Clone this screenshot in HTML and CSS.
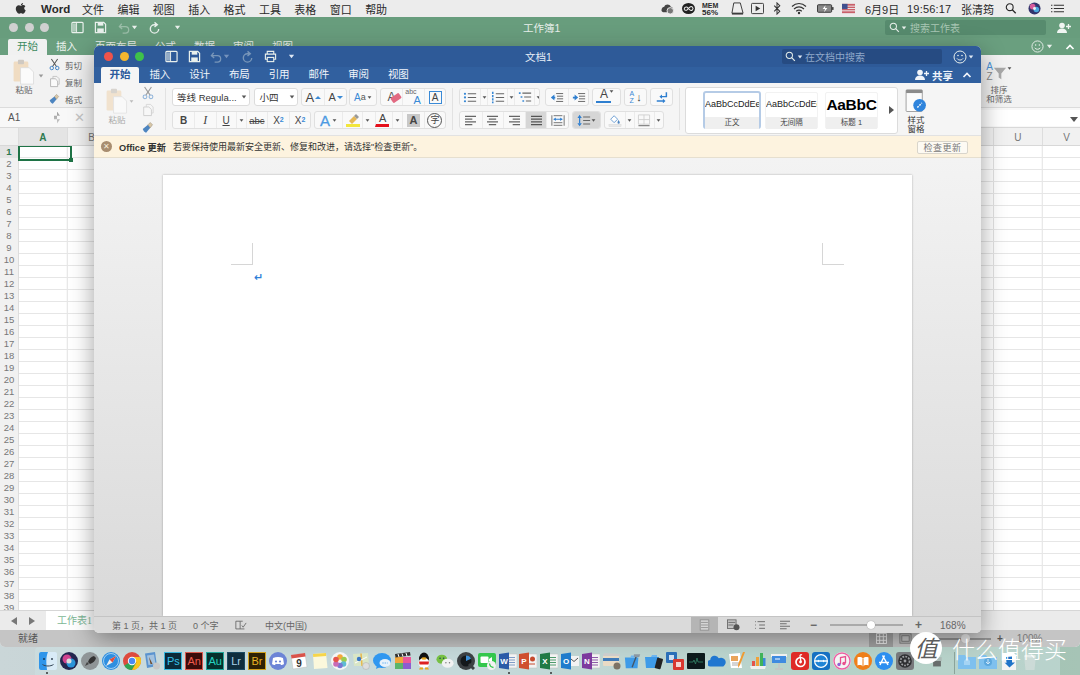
FILE: index.html
```html
<!DOCTYPE html>
<html lang="zh-CN">
<head>
    <meta charset="UTF-8">
    <title>Word 文档1</title>
    <link rel="stylesheet" href="styles.css">
</head>
<body>
<svg class="defs" xmlns="http://www.w3.org/2000/svg">
    <symbol id="sidebar" viewBox="0 0 14 14"><rect x="1" y="1.5" width="12" height="11" rx="1" fill="none" stroke="currentColor" stroke-width="1.3"/><rect x="2" y="2.5" width="4" height="9" fill="currentColor" opacity=".55"/><path d="M6 1.5v11" stroke="currentColor"/></symbol>
    <symbol id="save" viewBox="0 0 14 14"><path d="M1.5 1.5h9l2 2v9h-11z" fill="none" stroke="currentColor" stroke-width="1.3"/><rect x="4" y="1.5" width="6" height="3.5" fill="currentColor"/><rect x="3.5" y="8" width="7" height="4.5" fill="currentColor"/></symbol>
    <symbol id="undo" viewBox="0 0 14 14"><path d="M4 3 1.5 6 4.5 8.5M2 6h6a3.5 3.5 0 0 1 0 7H5" fill="none" stroke="currentColor" stroke-width="1.4"/></symbol>
    <symbol id="redo" viewBox="0 0 14 14"><path d="M7 1.5 10 4 7 6.500M9.500 4H7a4.500 4.500 0 1 0 4.500 4.500" fill="none" stroke="currentColor" stroke-width="1.5"/></symbol>
    <symbol id="print" viewBox="0 0 14 14"><path d="M3.500 4V1.500h7V4M3.500 10H1.500V4.500h11V10h-2" fill="none" stroke="currentColor" stroke-width="1.200"/><rect x="3.500" y="8" width="7" height="4.500" fill="none" stroke="currentColor" stroke-width="1.200"/></symbol>
    <symbol id="drop" viewBox="0 0 8 8"><path d="M1 2h6L4 6z" fill="currentColor"/></symbol>
    <symbol id="mag" viewBox="0 0 14 14"><circle cx="5.500" cy="5.500" r="4" fill="none" stroke="currentColor" stroke-width="1.300"/><path d="m8.500 8.500 4 4" stroke="currentColor" stroke-width="1.500"/></symbol>
    <symbol id="smile" viewBox="0 0 14 14"><circle cx="7" cy="7" r="6" fill="none" stroke="currentColor"/><circle cx="5" cy="5.500" r=".8" fill="currentColor"/><circle cx="9" cy="5.500" r=".8" fill="currentColor"/><path d="M4 8.500c1.500 2 4.500 2 6 0" fill="none" stroke="currentColor"/></symbol>
    <symbol id="share" viewBox="0 0 14 12"><circle cx="5" cy="3.500" r="2.800" fill="currentColor"/><path d="M0 11c0-3 2-4.500 5-4.500s5 1.500 5 4.500z" fill="currentColor"/><path d="M11.500 2v5M9 4.500h5" stroke="currentColor" stroke-width="1.300"/></symbol>
    <symbol id="chev" viewBox="0 0 10 8"><path d="M1.500 6 5 2.500 8.500 6" fill="none" stroke="currentColor" stroke-width="1.700"/></symbol>
    <symbol id="clip" viewBox="0 0 26 30"><rect x="1" y="3" width="17" height="23" rx="1.500" fill="#f0dcc2"/><rect x="6" y="1" width="7" height="5" rx="1" fill="#cfc9c2"/><path d="M9 10h10l5 5v14H9z" fill="#fbfbfb" stroke="#dcdcdc"/></symbol>
    <symbol id="scis" viewBox="0 0 14 16"><path d="m3 1 6.500 9.500M11 1 4.500 10.500" stroke="#555" stroke-width="1.300"/><circle cx="3.500" cy="12.500" r="2.200" fill="none" stroke="#3d7fc4" stroke-width="1.200"/><circle cx="10.500" cy="12.500" r="2.200" fill="none" stroke="#3d7fc4" stroke-width="1.200"/></symbol>
    <symbol id="copy" viewBox="0 0 14 16"><path d="M2 4.500h6l3 3v7H2z" fill="#fafafa" stroke="#aaa"/><path d="M5 4.500V1.500h5l3 3v7h-2" fill="none" stroke="#bbb"/></symbol>
    <symbol id="brush" viewBox="0 0 16 16"><path d="M1 10.500 8 5l3 4-5.500 6.500C3.500 15 1.800 13 1 10.500z" fill="#4d85c0"/><path d="m8 5 3-3 3 3-3 4z" fill="#d8c7a8" stroke="#8a7d66" stroke-width=".6"/></symbol>
    <symbol id="list-b" viewBox="0 0 16 14"><g fill="#3a8ad6"><rect x="1" y="1.500" width="2.500" height="2.500" rx="1.200"/><rect x="1" y="5.700" width="2.500" height="2.500" rx="1.200"/><rect x="1" y="10" width="2.500" height="2.500" rx="1.200"/></g><path d="M5.500 2.700H15M5.500 7H15M5.500 11.200H15" stroke="#666" stroke-width="1.200"/></symbol>
    <symbol id="list-n" viewBox="0 0 16 14"><path d="M2 .5v13" stroke="#3a8ad6" stroke-width="1.800" stroke-dasharray="2.500 1.200"/><path d="M5.500 2.700H15M5.500 7H15M5.500 11.200H15" stroke="#666" stroke-width="1.200"/></symbol>
    <symbol id="list-m" viewBox="0 0 16 14"><path d="M1 2h2M3 6.500h2M5 11h2" stroke="#3a8ad6" stroke-width="1.800"/><path d="M5 2h10M7 6.500h8M9 11h6" stroke="#666" stroke-width="1.200"/></symbol>
    <symbol id="out" viewBox="0 0 16 14"><path d="M5 3.500 1 7l4 3.500z" fill="#2f7fd0"/><path d="M4 7h2" stroke="#2f7fd0" stroke-width="2"/><path d="M7 2.500h8M8 5.500h7M8 8.500h7M7 11.500h8" stroke="#666" stroke-width="1.100"/></symbol>
    <symbol id="in" viewBox="0 0 16 14"><path d="M3 3.500 7 7l-4 3.500z" fill="#2f7fd0"/><path d="M1 7h3" stroke="#2f7fd0" stroke-width="2"/><path d="M7 2.500h8M8 5.500h7M8 8.500h7M7 11.500h8" stroke="#666" stroke-width="1.100"/></symbol>
    <symbol id="enter" viewBox="0 0 16 14"><path d="M13 1v5H7M2 11h8" fill="none" stroke="#2f7fd0" stroke-width="1.700"/><path d="M8 3.500 5 6l3 2.500zM9 8.500l3 2.500-3 2.500z" fill="#2f7fd0"/></symbol>
    <symbol id="al" viewBox="0 0 14 12"><path d="M1 1.500h12M1 4.500h8M1 7.500h12M1 10.500h8" stroke="#666" stroke-width="1.100"/></symbol>
    <symbol id="ac" viewBox="0 0 14 12"><path d="M1 1.500h12M3 4.500h8M1 7.500h12M3 10.500h8" stroke="#666" stroke-width="1.100"/></symbol>
    <symbol id="ar" viewBox="0 0 14 12"><path d="M1 1.500h12M5 4.500h8M1 7.500h12M5 10.500h8" stroke="#666" stroke-width="1.100"/></symbol>
    <symbol id="aj" viewBox="0 0 14 12"><path d="M1 1.500h12M1 4.500h12M1 7.500h12M1 10.500h12" stroke="#555" stroke-width="1.100"/></symbol>
    <symbol id="ad" viewBox="0 0 16 14"><path d="M1 1v12M15 1v12M3 1.500h10M3 12.500h10M3 9.500h10" stroke="#666"/><path d="M3 5.500h10" stroke="#2f7fd0" stroke-width="1.200"/><path d="M3 5.500 5.500 3.500v4zM13 5.500l-2.500-2v4z" fill="#2f7fd0"/></symbol>
    <symbol id="sp" viewBox="0 0 16 14"><path d="M3 .5 5.500 4h-5zM3 13.500.5 10h5z" fill="#2f7fd0"/><path d="M3 4v6" stroke="#2f7fd0" stroke-width="1.400"/><path d="M7 3h8M7 7h8M7 11h8" stroke="#666" stroke-width="1.200"/></symbol>
    <symbol id="fill" viewBox="0 0 16 15"><path d="m3 6 4-4 4 4-4 4z" fill="#fff" stroke="#5a93cf"/><path d="M12 7c1 1.500 1.500 2 1.500 3a1.300 1.300 0 0 1-2.600 0c0-1 .5-1.500 1.100-3z" fill="#4d85c0"/><rect x="1" y="12" width="14" height="2.500" fill="#e8e8e8" stroke="#d4d4d4" stroke-width=".5"/></symbol>
    <symbol id="bord" viewBox="0 0 14 14"><path d="M1 1h12v10H1zM7 1v10M1 6h12" fill="none" stroke="#d0d0d0"/><path d="M1 12.500h12" stroke="#888" stroke-width="1.300"/></symbol>
    <symbol id="book" viewBox="0 0 14 12"><path d="M1 1h5v9H1zM6 1h3M6 10h5" fill="none" stroke="#666"/><path d="m8 6 1.500 2L13 3" fill="none" stroke="#666"/></symbol>
    <symbol id="v-page" viewBox="0 0 14 14"><rect x="2" y="1" width="10" height="12" fill="#d5d5d5" stroke="#8d8d8d"/><path d="M3 4h8M3 7h8M3 10h8" stroke="#8d8d8d"/></symbol>
    <symbol id="v-net" viewBox="0 0 16 14"><rect x="1" y="1" width="10" height="10" fill="#c4c4c4" stroke="#666"/><path d="M2 4h8M2 7h6" stroke="#666"/><circle cx="11.500" cy="9.500" r="3.500" fill="#555"/></symbol>
    <symbol id="v-out" viewBox="0 0 14 12"><path d="M1 2h1M1 6h1M1 10h1M4 2h9M6 6h7M6 10h7" stroke="#666" stroke-width="1.100"/></symbol>
    <symbol id="pane" viewBox="0 0 24 30"><rect x="1" y="1" width="18" height="24" rx="1" fill="#fbfbfb" stroke="#9a9a9a"/><rect x="1" y="1" width="18" height="3.500" fill="#8b8b8b"/><circle cx="16" cy="18" r="7" fill="#2f84dc"/><path d="m13.500 20.500 5-5" stroke="#fff" stroke-width="1.600" stroke-dasharray="2 1.200"/></symbol>
    <symbol id="funnel" viewBox="0 0 16 16"><path d="M1 2h14L9.500 8.500V15l-3-2V8.500z" fill="#a8a8a8"/></symbol>
</svg>

<div class="menubar">
    <svg class="apple" viewBox="0 0 14 16"><path d="M10.300 1c.1 1.200-1.100 2.800-2.700 2.700C7.400 2.400 8.800 1 10.300 1zM7.600 4.500c.8 0 1.700-.8 3-.8 1 0 2 .5 2.600 1.400-2.200 1.400-1.800 4.300.4 5.300-.6 1.700-2.100 4.200-3.500 4.200-.9 0-1.300-.6-2.500-.6s-1.700.6-2.500.6C3.500 14.600 1 11.300 1 8.300c0-2.900 1.900-4.500 3.700-4.500 1.200 0 2.100.7 2.900.7z"/></svg>
    <b class="m-app">Word</b>
    <span class="m-item">文件</span><span class="m-item">编辑</span><span class="m-item">视图</span><span class="m-item">插入</span><span class="m-item">格式</span><span class="m-item">工具</span><span class="m-item">表格</span><span class="m-item">窗口</span><span class="m-item">帮助</span>
    <div class="m-status">
        <svg class="st w15" viewBox="0 0 15 14"><path d="M1 9c0-3 2-4 3-4 1-3 6-3 7 0 3 0 3 5 1 6H3C2 11 1 10 1 9z" fill="#444"/><circle cx="10.500" cy="9.500" r="3.500" fill="#777" stroke="#eee"/></svg>
        <svg class="st w15 ml6" viewBox="0 0 15 14"><ellipse cx="7.500" cy="7" rx="7" ry="6" fill="#222"/><path d="M3 8a2.200 2.200 0 0 1 3-2.500l3 3a2 2 0 1 0 0-3L6 8.500A2 2 0 0 1 3 8z" fill="none" stroke="#eee" stroke-width="1.100"/></svg>
        <span class="mem ml6">MEM<br>56%</span>
        <svg class="st w13 ml9" viewBox="0 0 14 14"><path d="M3 1h7l3 11H1z" fill="#eee" stroke="#333"/><path d="M1 12h12v1.500H1z" fill="#333"/></svg>
        <svg class="st w13 ml7" viewBox="0 0 14 14"><rect x=".5" y="1.500" width="13" height="11" rx="1" fill="none" stroke="#333"/><path d="m5 4 5 3-5 3z" fill="#333"/></svg>
        <svg class="st w8 ml9" viewBox="0 0 8 14"><path d="m1 4 6 6-3 3V1l3 3-6 6" fill="none" stroke="#333" stroke-width="1.100"/></svg>
        <svg class="st w16 ml10" viewBox="0 0 16 12"><path d="M1 4c4-4 10-4 14 0M3 6.500c3-2.500 7-2.500 10 0M5.200 8.700c1.600-1.300 4-1.300 5.600 0" fill="none" stroke="#333" stroke-width="1.200"/><circle cx="8" cy="10.500" r="1.200" fill="#333"/></svg>
        <svg class="st w17 ml10" viewBox="0 0 18 12"><rect x=".5" y="2" width="15" height="8" rx="1" fill="#888" stroke="#333"/><rect x="16" y="4.500" width="1.500" height="3" fill="#333"/><path d="M9 2.500 6 6.500h2.500L7.500 10 11 5.500H8.500z" fill="#fff"/></svg>
        <svg class="st w13 ml8" viewBox="0 0 14 10"><rect width="14" height="10" fill="#c9606a"/><path d="M0 2.500h14M0 5h14M0 7.500h14" stroke="#eee"/><rect width="6" height="5.500" fill="#3f4f8f"/></svg>
        <span class="m-text date">6月9日</span>
        <span class="m-text clock">19:56:17</span>
        <span class="m-text name">张清筠</span>
        <svg class="st w12 ml10" viewBox="0 0 14 14"><use href="#mag"/></svg>
        <svg class="st w13 ml11" viewBox="0 0 14 14"><circle cx="7" cy="7" r="6.500" fill="#33356e"/><circle cx="5" cy="5" r="3" fill="#d85a9b"/><circle cx="9" cy="8" r="3" fill="#4aa7de"/><circle cx="7" cy="7" r="1.600" fill="#eee"/></svg>
        <svg class="st w13 ml10" viewBox="0 0 14 10"><path d="M3 1.500h11M3 5h11M3 8.500h11" stroke="#333" stroke-width="1.100"/><path d="M0 1.500h1.500M0 5h1.500M0 8.500h1.500" stroke="#333" stroke-width="1.100"/></svg>
    </div>
</div>

<section class="win excel">
    <header class="x-title">
        <div class="lights dim"><i></i><i></i><i></i></div>
        <svg class="q x-i1"><use href="#sidebar"/></svg>
        <svg class="q x-i2"><use href="#save"/></svg>
        <svg class="q x-i3 faint"><use href="#undo"/></svg>
        <svg class="dr"><use href="#drop"/></svg>
        <svg class="q x-i4"><use href="#redo"/></svg>
        <svg class="dr x-i5"><use href="#drop"/></svg>
        <span class="x-name">工作簿1</span>
        <div class="x-search"><svg class="q sm"><use href="#mag"/></svg><svg class="dr tiny"><use href="#drop"/></svg><span>搜索工作表</span></div>
        <svg class="x-share"><use href="#share"/></svg>
    </header>
    <nav class="x-tabs">
        <span class="x-tab on">开始</span><span class="x-tab">插入</span><span class="x-tab">页面布局</span><span class="x-tab">公式</span><span class="x-tab">数据</span><span class="x-tab">审阅</span><span class="x-tab">视图</span>
        <div class="x-tabs-r"><svg class="q"><use href="#smile"/></svg><svg class="dr"><use href="#drop"/></svg><svg class="x-chev"><use href="#chev"/></svg></div>
    </nav>
    <div class="x-ribbon">
        <div class="x-paste"><svg class="big"><use href="#clip"/></svg><span>粘贴</span></div>
        <svg class="dr x-pdrop"><use href="#drop"/></svg>
        <ul class="x-clipcmds">
            <li><svg><use href="#scis"/></svg>剪切</li>
            <li><svg><use href="#copy"/></svg>复制</li>
            <li><svg><use href="#brush"/></svg>格式</li>
        </ul>
        <div class="x-sort">
            <div class="x-sort-ic"><span class="az">A<br><em>Z</em></span><svg><use href="#funnel"/></svg><svg class="dr"><use href="#drop"/></svg></div>
            <span>排序<br>和筛选</span>
        </div>
    </div>
    <div class="x-formula">
        <span class="x-ref">A1</span><span class="x-step"></span><span class="x-x">✕</span><span class="x-fx"></span>
    </div>
    <div class="x-cols">
        <span class="corner"></span><span class="col on">A</span><span class="col">B</span><span class="col">C</span><span class="col">D</span><span class="col">E</span><span class="col">F</span><span class="col">G</span><span class="col">H</span><span class="col">I</span><span class="col">J</span><span class="col">K</span><span class="col">L</span><span class="col">M</span><span class="col">N</span><span class="col">O</span><span class="col">P</span><span class="col">Q</span><span class="col">R</span><span class="col">S</span><span class="col">T</span><span class="col">U</span><span class="col">V</span>
    </div>
    <div class="x-sheet">
        <div class="x-rows">
            <span class="on">1</span><span>2</span><span>3</span><span>4</span><span>5</span><span>6</span><span>7</span><span>8</span><span>9</span><span>10</span><span>11</span><span>12</span><span>13</span><span>14</span><span>15</span><span>16</span><span>17</span><span>18</span><span>19</span><span>20</span><span>21</span><span>22</span><span>23</span><span>24</span><span>25</span><span>26</span><span>27</span><span>28</span><span>29</span><span>30</span><span>31</span><span>32</span><span>33</span><span>34</span><span>35</span><span>36</span><span>37</span><span>38</span><span>39</span>
        </div>
        <div class="x-cells"><div class="x-sel"></div></div>
    </div>
    <div class="x-sheets">
        <div class="x-nav"><i class="tl"></i><i class="tr"></i></div>
        <span class="x-sheet-tab">工作表1</span>
    </div>
    <footer class="x-status">
        <span>就绪</span>
        <div class="x-view">
            <span class="x-grid-btn"><svg viewBox="0 0 12 12"><path d="M.5.500h11v11H.5zM4 .5v11M8 .5v11M.5 4h11M.5 8h11" fill="none" stroke="#eee"/></svg></span>
            <svg class="x-lay" viewBox="0 0 14 14"><rect x="1" y="2" width="12" height="10" fill="none" stroke="#777"/><rect x="3" y="4" width="8" height="6" fill="none" stroke="#777"/></svg>
            <span class="x-slider"><i></i></span>
            <b class="x-plus">+</b>
            <span class="x-zoom">100%</span>
        </div>
    </footer>
</section>

<section class="win word">
    <header class="w-title">
        <div class="lights"><i class="r"></i><i class="y"></i><i class="g"></i></div>
        <svg class="q w-i1"><use href="#sidebar"/></svg>
        <svg class="q w-i2"><use href="#save"/></svg>
        <svg class="q w-i3 faint"><use href="#undo"/></svg>
        <svg class="dr faint"><use href="#drop"/></svg>
        <svg class="q w-i4 faint"><use href="#redo"/></svg>
        <svg class="q w-i5"><use href="#print"/></svg>
        <svg class="dr w-i6"><use href="#drop"/></svg>
        <span class="w-name">文档1</span>
        <div class="w-search"><svg class="q sm"><use href="#mag"/></svg><svg class="dr tiny"><use href="#drop"/></svg><span>在文档中搜索</span></div>
        <svg class="q w-smile"><use href="#smile"/></svg><svg class="dr"><use href="#drop"/></svg>
    </header>
    <nav class="w-tabs">
        <span class="w-tab on">开始</span><span class="w-tab">插入</span><span class="w-tab">设计</span><span class="w-tab">布局</span><span class="w-tab">引用</span><span class="w-tab">邮件</span><span class="w-tab">审阅</span><span class="w-tab">视图</span>
        <div class="w-share"><svg><use href="#share"/></svg><span>共享</span><svg class="w-chev"><use href="#chev"/></svg></div>
    </nav>
    <div class="ribbon">
        <div class="r-paste">
            <div class="r-paste-big"><svg class="big"><use href="#clip"/></svg><span>粘贴</span></div>
            <svg class="dr r-pdrop"><use href="#drop"/></svg>
            <div class="r-small"><svg class="faded"><use href="#scis"/></svg><svg class="faded"><use href="#copy"/></svg><svg><use href="#brush"/></svg></div>
        </div>
        <div class="sep"></div>
        <div class="r-font">
            <div class="r-row">
                <div class="sel s-font"><span>等线 Regula...</span><svg class="dr"><use href="#drop"/></svg></div>
                <div class="sel s-size"><span>小四</span><svg class="dr"><use href="#drop"/></svg></div>
                <div class="grp g1">
                    <span class="b w23 t-a">A<i class="up"></i></span>
                    <span class="b w23 t-a2">A<i class="dn"></i></span>
                </div>
                <div class="grp g2"><span class="b w26 t-aa">A<em>a</em><svg class="dr"><use href="#drop"/></svg></span></div>
                <div class="grp g3">
                    <span class="b w22 t-er">A<i></i></span>
                    <span class="b w22 t-abc"><small>abc</small><strong>A</strong></span>
                    <span class="b w22 t-box"><span>A</span></span>
                </div>
            </div>
            <div class="r-row">
                <div class="grp">
                    <span class="b w21 t-b">B</span>
                    <span class="b w22 t-i">I</span>
                    <span class="b w20 t-u">U</span>
                    <span class="b w10"><svg class="dr"><use href="#drop"/></svg></span>
                    <span class="b w22 t-s">abc</span>
                    <span class="b w22 t-x">X<sub>2</sub></span>
                    <span class="b w22 t-x">X<sup>2</sup></span>
                </div>
                <div class="grp g-m">
                    <span class="b w27 t-fx">A<svg class="dr"><use href="#drop"/></svg></span>
                    <span class="b w20 t-hl"><svg viewBox="0 0 14 14"><path d="m3 8 5-5 3 3-5 5z" fill="#e6b856"/><path d="M8 3l2-2 3 3-2 2z" fill="#999"/><rect y="11" width="14" height="3" fill="#f2e63c"/></svg></span>
                    <span class="b w10"><svg class="dr"><use href="#drop"/></svg></span>
                    <span class="b w20 t-col">A</span>
                    <span class="b w10"><svg class="dr"><use href="#drop"/></svg></span>
                    <span class="b w22 t-sh"><span>A</span></span>
                    <span class="b w22 t-ph"><span>字</span></span>
                </div>
            </div>
        </div>
        <div class="sep s2"></div>
        <div class="r-para">
            <div class="r-row">
                <div class="grp">
                    <span class="b w20"><svg class="ic"><use href="#list-b"/></svg></span><span class="b w7"><svg class="dr"><use href="#drop"/></svg></span>
                    <span class="b w20"><svg class="ic"><use href="#list-n"/></svg></span><span class="b w7"><svg class="dr"><use href="#drop"/></svg></span>
                    <span class="b w20"><svg class="ic"><use href="#list-m"/></svg></span><span class="b w7"><svg class="dr"><use href="#drop"/></svg></span>
                </div>
                <div class="grp g-in">
                    <span class="b w22"><svg class="ic"><use href="#out"/></svg></span>
                    <span class="b w22"><svg class="ic"><use href="#in"/></svg></span>
                </div>
                <div class="grp g-a">
                    <span class="b w28 t-dir">A<i></i><svg class="dr"><use href="#drop"/></svg></span>
                </div>
                <div class="grp g-a">
                    <span class="b w22 t-sort"><small>A<br>Z</small><b>↓</b></span>
                </div>
                <div class="grp g-a">
                    <span class="b w22"><svg class="ic"><use href="#enter"/></svg></span>
                </div>
            </div>
            <div class="r-row">
                <div class="grp">
                    <span class="b w22"><svg class="ic2"><use href="#al"/></svg></span>
                    <span class="b w22"><svg class="ic2"><use href="#ac"/></svg></span>
                    <span class="b w22"><svg class="ic2"><use href="#ar"/></svg></span>
                    <span class="b w22 act"><svg class="ic2"><use href="#aj"/></svg></span>
                    <span class="b w22"><svg class="ic"><use href="#ad"/></svg></span>
                </div>
                <div class="grp g-sp">
                    <span class="b w27 act"><svg class="ic"><use href="#sp"/></svg><svg class="dr"><use href="#drop"/></svg></span>
                </div>
                <div class="grp g-sp">
                    <span class="b w20"><svg class="ic"><use href="#fill"/></svg></span><span class="b w9"><svg class="dr"><use href="#drop"/></svg></span>
                    <span class="b w20"><svg class="ic"><use href="#bord"/></svg></span><span class="b w9"><svg class="dr"><use href="#drop"/></svg></span>
                </div>
            </div>
        </div>
        <div class="sep s3"></div>
        <div class="gallery">
            <div class="style chosen"><div class="s-prev">AaBbCcDdEe</div><div class="s-cap">正文</div></div>
            <div class="style"><div class="s-prev">AaBbCcDdEe</div><div class="s-cap">无间隔</div></div>
            <div class="style h1"><div class="s-prev">AaBbC</div><div class="s-cap">标题 1</div></div>
            <i class="more"></i>
        </div>
        <div class="r-pane"><svg><use href="#pane"/></svg><span>样式<br>窗格</span></div>
    </div>
    <div class="banner">
        <span class="b-x">✕</span>
        <b>Office 更新</b>
        <span class="b-msg">若要保持使用最新安全更新、修复和改进，请选择"检查更新"。</span>
        <span class="b-btn">检查更新</span>
    </div>
    <main class="doc">
        <div class="page">
            <div class="marks"><i class="crop cl"></i><i class="crop cr"></i></div>
            <div class="para">↵</div>
        </div>
    </main>
    <footer class="w-status">
        <span class="w-s1">第 1 页，共 1 页</span>
        <span class="w-s2">0 个字</span>
        <svg class="w-book"><use href="#book"/></svg>
        <span class="w-s3">中文(中国)</span>
        <div class="w-views">
            <span class="v-on"><svg><use href="#v-page"/></svg></span>
            <svg><use href="#v-net"/></svg>
            <svg class="v-o"><use href="#v-out"/></svg>
            <svg class="v-o"><use href="#al"/></svg>
        </div>
        <b class="w-minus">−</b>
        <span class="w-slider"><i></i></span>
        <b class="w-plus">+</b>
        <span class="w-zoom">168%</span>
    </footer>
</section>

<div class="dock">
    <svg viewBox="0 0 18 18"><rect width="18" height="18" rx="2" fill="#d9ebf7"/><path d="M0 2a2 2 0 0 1 2-2h7c-2 5-2 9-1 18H2a2 2 0 0 1-2-2z" fill="#2f95ea"/><path d="M5 6v2M13 6v2" stroke="#123" stroke-width="1.200"/><path d="M3.500 12.500c3 2 8 2 11 0" fill="none" stroke="#345"/></svg>
    <svg viewBox="0 0 18 18"><circle cx="9" cy="9" r="9" fill="#23264f"/><circle cx="7" cy="7" r="4.500" fill="#d1448f"/><circle cx="11" cy="11" r="4.500" fill="#2a93d8"/><circle cx="9" cy="9" r="2.500" fill="#ddd"/></svg>
    <svg viewBox="0 0 18 18"><circle cx="9" cy="9" r="9" fill="#8f9597"/><path d="M13 4c-3 .5-5 3-6 6l2 2c3-1 5.500-3 6-6z" fill="#333"/><path d="m6 10-2 4 4-2z" fill="#444"/></svg>
    <svg viewBox="0 0 18 18"><circle cx="9" cy="9" r="9" fill="#2e8fe0"/><circle cx="9" cy="9" r="7.500" fill="none" stroke="#cfe6f8" stroke-width=".7"/><path d="m14 4-6.500 3.500L4 14l6.500-3.500z" fill="#eee"/><path d="M14 4 7.500 7.500l3 3z" fill="#e44c3a"/></svg>
    <svg viewBox="0 0 18 18"><circle cx="9" cy="9" r="9" fill="#dd4b3e"/><path d="M9 9 1.200 13.500A9 9 0 0 0 9 18l4.500-7.800z" fill="#2fa552"/><path d="M9 5h8.100A9 9 0 0 1 9 18l4.500-7.800z" fill="#f8c61c"/><circle cx="9" cy="9" r="4.200" fill="#fff"/><circle cx="9" cy="9" r="3.200" fill="#4a8af4"/></svg>
    <svg viewBox="0 0 18 18"><path d="M2 1.500 12 0l2 14-10 2z" fill="#5b94cf"/><path d="M4 3.500 11 2.500l1.500 9.500-7 1z" fill="#a3c2de"/><path d="m6 5 3.500 7L7.500 12z" fill="#6d4a2c"/><circle cx="13.500" cy="14" r="3.500" fill="#c8c8c8"/></svg>
    <span class="ad ps">Ps</span><span class="ad an">An</span><span class="ad au">Au</span><span class="ad lr">Lr</span><span class="ad br">Br</span>
    <svg viewBox="0 0 18 18"><circle cx="9" cy="9" r="9" fill="#6c84d6"/><path d="M4 6c3-1.500 7-1.500 10 0l1 6c-1 .8-2 1-3 1l-.8-1.200c-1.500.4-2.900.4-4.400 0L6 13c-1 0-2-.2-3-1z" fill="#fff"/><circle cx="7" cy="9.500" r="1.100" fill="#6c84d6"/><circle cx="11" cy="9.500" r="1.100" fill="#6c84d6"/></svg>
    <svg viewBox="0 0 18 18"><path d="M1 3 15 1l2 14-14 2z" fill="#fff" stroke="#bbb" stroke-width=".5"/><path d="M1 3 15 1l.5 3.500L1.500 6.500z" fill="#d9534a"/><text x="9" y="14.500" class="cal">9</text></svg>
    <svg viewBox="0 0 18 18"><path d="M2 2 15 1l1.500 15L3 17z" fill="#fbf8dc"/><path d="M2 2 15 1l.2 3L2.200 5z" fill="#f6d54a"/></svg>
    <svg viewBox="0 0 18 18"><circle cx="9" cy="9" r="9" fill="#f5f5f5"/><circle cx="9" cy="5" r="2.800" fill="#f3a83b"/><circle cx="13" cy="7.500" r="2.800" fill="#9ccb4f"/><circle cx="12.500" cy="12" r="2.800" fill="#5fbcd3"/><circle cx="9" cy="13.500" r="2.800" fill="#7a78d2"/><circle cx="5" cy="12" r="2.800" fill="#c86bb6"/><circle cx="5" cy="7.500" r="2.800" fill="#e5534b"/></svg>
    <svg viewBox="0 0 18 18"><path d="M1 2 16 1l1 13H2z" fill="#d9e6c6"/><path d="M9 1.500 10 14" stroke="#e8b84d" stroke-width="1.500"/><path d="M3 11 15 5" stroke="#fff"/><circle cx="7" cy="7" r="2.200" fill="#3b79c7"/><circle cx="14" cy="14" r="3.500" fill="#ddd" stroke="#aaa" stroke-width=".5"/></svg>
    <svg viewBox="0 0 18 18"><ellipse cx="9" cy="8.500" rx="9" ry="7.500" fill="#2f97f0"/><path d="m4 13-1 4 5-2.500z" fill="#2f97f0"/><ellipse cx="12" cy="11" rx="5.500" ry="4" fill="#e8f2fb"/><path d="M9.500 11h5" stroke="#2f97f0" stroke-dasharray="1 1.200" stroke-width="1.100"/></svg>
    <svg viewBox="0 0 18 18"><path d="M1 5h16v12H1z" fill="#8b5ed0"/><path d="M1 5h8v6H1z" fill="#f0a63a"/><path d="M9 5h8v6H9z" fill="#e9579a"/><path d="M1 11h8v6H1z" fill="#5bb56a"/><path d="M1 2 16 0l.5 3.500L1.500 5.500z" fill="#333"/><path d="m4 2 1 3M8 1.500l1 3M12 1l1 3" stroke="#fff"/></svg>
    <svg viewBox="0 0 18 18"><ellipse cx="9" cy="7" rx="5" ry="6.500" fill="#111"/><ellipse cx="9" cy="11" rx="5.500" ry="5" fill="#fff"/><path d="M4 9.500h10l-.5 3H4.500z" fill="#d22"/><path d="M5 15.500h3v2H4zM10 15.500h3l1 2h-4z" fill="#e9a820"/><ellipse cx="9" cy="6.500" rx="2.500" ry="1.200" fill="#e9a820"/></svg>
    <svg viewBox="0 0 20 18"><ellipse cx="6.500" cy="7" rx="6" ry="5" fill="#76c043"/><circle cx="4.500" cy="6" r=".9" fill="#245"/><circle cx="8.500" cy="6" r=".9" fill="#245"/><ellipse cx="13" cy="11.500" rx="6.500" ry="5" fill="#f2f2f2"/><circle cx="11" cy="11" r=".8" fill="#777"/><circle cx="15" cy="11" r=".8" fill="#777"/></svg>
    <svg viewBox="0 0 18 18"><circle cx="9" cy="9" r="9" fill="#3c4043"/><circle cx="9" cy="9" r="5.500" fill="#14181b"/><path d="M9 3.500a5.500 5.500 0 0 1 5 3.200L9 9z" fill="#3d8fd6"/><path d="m12 12 5 5" stroke="#3c4043" stroke-width="3"/></svg>
    <svg viewBox="0 0 18 18"><rect y="1" width="18" height="14" rx="2" fill="#33c74c"/><rect x="2.500" y="4.500" width="8" height="6.500" rx="1" fill="#fff"/><path d="m11 7 3-2v6l-3-2z" fill="#fff"/><circle cx="13.500" cy="13.500" r="4.500" fill="#f2f2f2"/><path d="M11.500 11.500c.3 2.500 1.500 3.700 4 4" stroke="#33c74c" stroke-width="1.300" fill="none"/></svg>
    <svg viewBox="0 0 18 18"><rect x="8" y="2" width="10" height="14" fill="#f3f3f3" stroke="#bbb" stroke-width=".5"/><path d="M10 5.500h6M10 8h6M10 10.500h6M10 13h6" stroke="#7f9cc6"/><path d="M0 2 10 .5v17L0 16z" fill="#2b5ba8"/><text x="5" y="12" class="ol">W</text></svg>
    <svg viewBox="0 0 18 18"><rect x="8" y="2" width="10" height="14" fill="#f3f3f3" stroke="#bbb" stroke-width=".5"/><circle cx="13.500" cy="7" r="2.500" fill="#c64b2e"/><path d="M10 12h6" stroke="#c64b2e"/><path d="M0 2 10 .5v17L0 16z" fill="#cf4f2f"/><text x="5" y="12" class="ol">P</text></svg>
    <svg viewBox="0 0 18 18"><rect x="8" y="2" width="10" height="14" fill="#f3f3f3" stroke="#bbb" stroke-width=".5"/><path d="M10 5.500h6M10 8h6M10 10.500h6M10 13h6" stroke="#4e9a6c"/><path d="M0 2 10 .5v17L0 16z" fill="#1f7a45"/><text x="5" y="12" class="ol">X</text></svg>
    <svg viewBox="0 0 18 18"><rect x="8" y="4" width="10" height="10" fill="#f3f3f3"/><path d="m10 7 3 2.500L17 6" stroke="#555" fill="none"/><path d="M0 2 10 .5v17L0 16z" fill="#1f7ccc"/><text x="5" y="12" class="ol">O</text></svg>
    <svg viewBox="0 0 18 18"><rect x="8" y="2" width="10" height="14" fill="#f3f3f3" stroke="#bbb" stroke-width=".5"/><path d="M10 5.500h6M10 8h6M10 10.500h6M10 13h6" stroke="#8d5ba8"/><path d="M0 2 10 .5v17L0 16z" fill="#7d3a9e"/><text x="5" y="12" class="ol">N</text></svg>
    <svg viewBox="0 0 18 18"><rect y="3" width="16" height="11" rx="1" fill="#e9dbc5"/><path d="M0 6h16v3H0z" fill="#3f7ab8"/><path d="M1 1 17 2v2H0z" fill="#ccc"/><circle cx="14" cy="14" r="3.500" fill="#7d7365"/></svg>
    <svg viewBox="0 0 20 18"><path d="M1 5h15l-1 12H2z" fill="#3e9be8"/><path d="M1 5h6l1-2h4v2" fill="#6ab5f2"/><path d="m9 16 5-13" stroke="#456" stroke-width="1.500"/><path d="M11 1.500h7l-1 3h-6z" fill="#8b98a3"/></svg>
    <svg viewBox="0 0 18 18"><path d="M0 5h14l-1 11H1z" fill="#3e9be8"/><path d="M0 5h6l1-2h5v2" fill="#6ab5f2"/><rect x="11" y="6" width="6" height="11" rx="1" transform="rotate(15 14 11)" fill="#222"/></svg>
    <svg viewBox="0 0 18 18"><rect y="0" width="11" height="11" rx="1" fill="#2b6fb8"/><rect x="3" y="3" width="5" height="5" fill="#cfe0f2"/><rect x="7" y="7" width="11" height="11" rx="1" fill="#d8382f"/><rect x="10" y="10" width="5" height="5" fill="#f6d4d0"/></svg>
    <svg viewBox="0 0 18 18"><rect y="1" width="18" height="16" rx="1" fill="#0c1a1c"/><path d="M2 10h4l1-2 1.500 4L10 6l1 4h5" fill="none" stroke="#2f7d62" stroke-width=".9"/></svg>
    <svg viewBox="0 0 20 18"><path d="M3 15a3.500 3.500 0 0 1-.5-7A5 5 0 0 1 12 6a4.500 4.500 0 0 1 5 9z" fill="#1f77d0"/></svg>
    <svg viewBox="0 0 18 18"><path d="M1 2 12 1l2 15H3z" fill="#fff"/><path d="M3 4h7v5H3z" fill="#eaa45a"/><path d="M4 11h7M4 13h7" stroke="#aaa"/><path d="m17 0-5 13-2 3 .2-4L15 0z" fill="#ef9b33"/></svg>
    <svg viewBox="0 0 18 18"><path d="M1 14h16l-1 3H2z" fill="#f0f0f0"/><rect x="3" y="9" width="3" height="5" fill="#e5534b"/><rect x="7" y="5" width="3" height="9" fill="#f1a23a"/><rect x="11" y="1" width="3" height="13" fill="#3fb35a"/><rect x="14" y="6" width="2.500" height="8" fill="#3a8ad6"/></svg>
    <svg viewBox="0 0 18 18"><rect x="1" y="2" width="16" height="3" fill="#f0f0f0"/><rect x="2" y="4" width="14" height="7" fill="#3f8be0"/><path d="M5 7h5" stroke="#fff"/><path d="M9 11v5M5 17h8" stroke="#c4c4c4" stroke-width="1.400"/></svg>
    <svg viewBox="0 0 18 18"><rect width="18" height="18" rx="3" fill="#df2a26"/><circle cx="9.500" cy="10" r="4.500" fill="none" stroke="#fff" stroke-width="1.700"/><circle cx="9.500" cy="10" r="1.400" fill="#fff"/><path d="M11 3c-1-.7-2-.3-2 1l1 6" fill="none" stroke="#fff" stroke-width="1.300"/></svg>
    <svg viewBox="0 0 18 18"><rect width="18" height="18" rx="3" fill="#1570c2"/><circle cx="9" cy="9" r="7" fill="#fff"/><circle cx="9" cy="9" r="5.800" fill="#1f84d6"/><path d="M3 9h12" stroke="#fff" stroke-width="1.500"/><path d="M5.500 9 7 7.500v3zM12.500 9 11 7.500v3z" fill="#fff"/></svg>
    <svg viewBox="0 0 18 18"><circle cx="9" cy="9" r="9" fill="#f4f4f4"/><circle cx="9" cy="9" r="8" fill="none" stroke="#ec5fa2" stroke-width="1.400"/><path d="M7.500 12V5.500L12.500 4.500V11" fill="none" stroke="#e84f8e" stroke-width="1.300"/><circle cx="6" cy="12.500" r="1.700" fill="#8d63d6"/><circle cx="11" cy="11.500" r="1.700" fill="#e84f8e"/></svg>
    <svg viewBox="0 0 18 18"><circle cx="9" cy="9" r="9" fill="#ef7f1a"/><path d="M3.500 5.500c2-.7 4-.5 5.500 1 1.500-1.500 3.500-1.700 5.500-1v8c-2-.7-4-.5-5.500 1-1.500-1.500-3.500-1.700-5.500-1z" fill="#fff"/><path d="M9 6.500v8" stroke="#ef7f1a"/></svg>
    <svg viewBox="0 0 18 18"><circle cx="9" cy="9" r="9" fill="#2c8ff0"/><path d="M9.500 3.500 5 13M7.500 3.500 13 13M4 10.500h10" stroke="#fff" stroke-width="1.400"/></svg>
    <svg viewBox="0 0 18 18"><rect width="18" height="18" rx="3" fill="#77797c"/><circle cx="9" cy="9" r="6.800" fill="#2d2e30"/><circle cx="9" cy="9" r="4.500" fill="none" stroke="#9b9da0" stroke-width="1.700" stroke-dasharray="1.800 1.200"/><circle cx="9" cy="9" r="1.400" fill="#9b9da0"/></svg>
    <svg class="d-mini" viewBox="0 0 18 18"><rect x="4" y="9" width="10" height="7" fill="#555"/><rect x="3" y="4" width="12" height="5" fill="#aab5b2"/></svg>
    <span class="d-sep"></span>
    <svg class="d-f" viewBox="0 0 18 18"><path d="M0 3h7l1 2h10v12H0z" fill="#7ec0ee"/><path d="M9 6 6 9v4h6V9z" fill="#a5d4f4"/></svg>
    <svg class="d-f" viewBox="0 0 18 18"><path d="M0 3h7l1 2h10v12H0z" fill="#7ec0ee"/><circle cx="9" cy="10" r="4" fill="#5da8de"/><path d="M9 7v5M7 10l2 2 2-2" stroke="#cfe6f8" fill="none"/></svg>
    <svg class="d-f" viewBox="0 0 18 18"><rect x="2" y="5" width="14" height="13" fill="#f4f4f4"/><path d="M2 1h12l2 2v5H2z" fill="#fff"/><path d="m6 5 6-.5v6h3l-5.500 5-5-5 2 .5z" fill="#1f74c9"/></svg>
    <svg class="d-f" viewBox="0 0 18 18"><path d="M3 4h12l-1.500 14h-9z" fill="#cfdcd8" opacity=".85"/><ellipse cx="9" cy="4" rx="6" ry="1.500" fill="#e3ebe8"/></svg>
</div>
<div class="dock-dots"><i class="d1"></i><i class="d2"></i><i class="d3"></i></div>

<div class="mark">
    <span class="mark-c">值</span>
    <span class="mark-t">什么值得买</span>
</div>
</body>
</html>
```

FILE: styles.css
```css
html, body {
    margin: 0;
    padding: 0;
    height: 675px;
    overflow: hidden;
}
body {
    position: relative;
    width: 1080px;
    font-family: "Liberation Sans", "Noto Sans CJK SC", sans-serif;
    font-size: 11px;
    color: #333;
    background: linear-gradient(90deg, #cad6d8 0%, #bcd0d0 45%, #9dc3ac 78%, #a6c4b6 100%);
}
.defs { display: none; }
svg { display: block; flex: none; }
i, em { font-style: normal; }

/* menu bar */
.menubar {
    height: 17px;
    background: #ececec;
    display: flex;
    align-items: center;
    padding-left: 15px;
    color: #2a2a2a;
    font-size: 11px;
}
.apple { width: 11px; height: 13px; fill: #333; margin-right: 15px; }
.m-app { width: 41px; font-size: 11.5px; flex: none; }
.m-item { width: 22px; margin-right: 13.400px; flex: none; white-space: nowrap; }
.m-status {
    position: absolute;
    left: 660px;
    top: 0;
    height: 17px;
    display: flex;
    align-items: center;
}
.st { height: 13px; }
.w8 { width: 8px; } .w12 { width: 12px; } .w13 { width: 13px; } .w15 { width: 15px; } .w16 { width: 16px; } .w17 { width: 17px; }
.ml6 { margin-left: 6px; } .ml7 { margin-left: 7px; } .ml8 { margin-left: 8px; } .ml9 { margin-left: 9px; } .ml10 { margin-left: 10px; } .ml11 { margin-left: 11px; }
.mem { font-size: 8px; line-height: 7px; font-weight: bold; width: 20px; }
.mem::first-line { font-size: 7px; }
.m-text { font-size: 11px; white-space: nowrap; }
.date { margin-left: 10px; width: 36px; }
.clock { margin-left: 6px; width: 46px; letter-spacing: .2px; }
.name { margin-left: 8px; width: 34px; }

/* windows on the desktop */
.win { position: absolute; overflow: hidden; }
.excel {
    left: 0;
    top: 17px;
    width: 1080px;
    height: 630px;
    background: #f1f1f1;
    border-radius: 0 0 5px 5px;
    display: flex;
    flex-direction: column;
}
.word {
    left: 94px;
    top: 46px;
    width: 887px;
    height: 587px;
    border-radius: 5px 5px 5px 5px;
    box-shadow: 0 6px 24px rgba(0, 0, 0, .38);
    display: flex;
    flex-direction: column;
    background: #f2f2f2;
}
.lights { display: flex; gap: 6.500px; }
.lights i { width: 9px; height: 9px; border-radius: 50%; background: #d0d0d0; }
.lights .r { background: #f0534b; }
.lights .y { background: #f5b62e; }
.lights .g { background: #3fc24a; }
.q { width: 13px; height: 13px; color: #e9f0ec; }
.q.sm { width: 11px; height: 11px; }
.dr { width: 7px; height: 7px; color: #555; }
.dr.tiny { width: 6px; height: 6px; }
.faint { opacity: .4; }

/* excel */
.x-title {
    height: 21px;
    background: #689d7d;
    display: flex;
    align-items: center;
    color: #e9f0ec;
    padding-left: 9px;
    flex: none;
    position: relative;
}
.x-title .dr, .x-tabs-r .dr { color: #e9f0ec; }
.x-i1 { margin-left: 22px; }
.x-i2 { margin-left: 10px; }
.x-i3 { margin-left: 11px; }
.x-i4 { margin-left: 10px; }
.x-i5 { margin-left: 13px; }
.x-name { position: absolute; left: 523px; font-size: 10.500px; }
.x-search {
    position: absolute;
    left: 885px;
    width: 161px;
    height: 15px;
    background: #578b6e;
    border-radius: 2px;
    display: flex;
    align-items: center;
    gap: 1px;
    padding-left: 4px;
    box-sizing: border-box;
    font-size: 10px;
    color: #a9c7b5;
}
.x-search span { margin-left: 2px; }
.x-share { position: absolute; left: 1057px; width: 14px; height: 12px; color: #f0f5f2; }
.x-tabs {
    height: 17px;
    background: #6a9f7f;
    display: flex;
    align-items: flex-end;
    padding-left: 8px;
    color: #eef4f0;
    font-size: 10.500px;
    flex: none;
    position: relative;
}
.x-tab { padding: 0 9px; height: 16px; line-height: 15px; white-space: nowrap; }
.x-tab.on { background: #f1f1f1; color: #3c8a5f; border-radius: 2px 2px 0 0; }
.x-tabs-r { position: absolute; left: 1031px; top: 2px; display: flex; align-items: center; gap: 2px; }
.x-chev { width: 10px; height: 8px; margin-left: 10px; color: #fff; }
.x-ribbon {
    height: 53px;
    background: #f2f2f2;
    flex: none;
    position: relative;
    display: flex;
    border-bottom: 1px solid #dcdcdc;
    box-sizing: border-box;
    font-size: 8.500px;
    color: #666;
}
.big { width: 24px; height: 26px; }
.x-paste { margin-left: 11px; padding-top: 4px; display: flex; flex-direction: column; align-items: center; gap: 0; width: 26px; line-height: 11px; }
.x-pdrop { margin: 18px 0 0 1px; color: #999; width: 6px; height: 6px; }
.x-clipcmds { list-style: none; margin: 0 0 0 5px; padding: 1px 0 0; }
.x-clipcmds li { height: 17px; display: flex; align-items: center; gap: 5px; }
.x-clipcmds svg { width: 11px; height: 13px; }
.x-sort { position: absolute; left: 983px; top: 7px; width: 32px; text-align: center; line-height: 9px; }
.x-sort-ic { display: flex; align-items: flex-start; justify-content: center; height: 24px; }
.x-sort-ic svg { width: 14px; height: 14px; margin-top: 4px; }
.x-sort-ic .dr { width: 5px; height: 5px; }
.az { font-size: 10px; line-height: 10px; color: #4b94d8; }
.az em { color: #8a8a8a; }
.x-formula {
    height: 20px;
    flex: none;
    background: #f8f8f8;
    display: flex;
    align-items: center;
    position: relative;
    border-bottom: 1px solid #d9d9d9;
    box-sizing: border-box;
    color: #555;
}
.x-ref { width: 54px; padding-left: 8px; box-sizing: border-box; font-size: 10px; }
.x-step { width: 6px; height: 12px; background: linear-gradient(#9c9c9c, #ccc); clip-path: polygon(50% 0, 100% 35%, 0 35%, 0 65%, 100% 65%, 50% 100%); }
.x-x { margin-left: 14px; color: #c4c4c4; font-size: 13px; }
.x-fx { position: absolute; left: 981px; right: 0; top: 2px; bottom: 1px; background: #fff; }
.x-fx::after { content: ""; position: absolute; right: 2px; top: 7px; border: 4px solid transparent; border-top: 5px solid #555; }
.x-cols {
    height: 18px;
    flex: none;
    display: flex;
    background: #f1f1f1;
    border-bottom: 1px solid #d8d8d8;
    box-sizing: border-box;
    color: #777;
    font-size: 10px;
}
.corner { width: 19px; flex: none; border-right: 1px solid #ddd; box-sizing: border-box; }
.col { width: 48.750px; flex: none; text-align: center; line-height: 19px; border-right: 1px solid #ddd; box-sizing: border-box; }
.col.on { background: #e4e4e4; color: #2d7a50; font-weight: bold; }
.x-sheet { flex: 1; display: flex; min-height: 0; overflow: hidden; }
.x-rows { width: 19px; flex: none; background: #f1f1f1; border-right: 1px solid #ddd; box-sizing: border-box; }
.x-rows span { display: block; height: 12px; line-height: 12px; text-align: center; font-size: 9.500px; color: #777; }
.x-rows .on { color: #2d7a50; font-weight: bold; background: #e4e4e4; }
.x-cells {
    flex: 1;
    position: relative;
    background-color: #fff;
    background-image: linear-gradient(#e6e6e6 1px, transparent 1px), linear-gradient(90deg, #e2e2e2 1px, transparent 1px);
    background-size: 100% 12px, 48.750px 100%;
    background-position: 0 -1px, -1px 0;
}
.x-sel { position: absolute; left: -1px; top: -1px; width: 50px; height: 12px; border: 2px solid #1f7346; }
.x-sel::after { content: ""; position: absolute; right: -3px; bottom: -3px; width: 4px; height: 4px; background: #1f7346; }
.x-sheets { height: 20px; flex: none; display: flex; background: #ebebeb; border-top: 1px solid #d6d6d6; box-sizing: border-box; }
.x-nav { width: 46px; display: flex; align-items: center; justify-content: center; gap: 12px; }
.tl, .tr { width: 0; height: 0; border: 4px solid transparent; }
.tl { border-right: 6px solid #777; border-left: 0; }
.tr { border-left: 6px solid #777; border-right: 0; }
.x-sheet-tab { width: 48px; background: #fff; color: #7db796; font-family: "Liberation Serif", "Noto Sans CJK SC", serif; font-size: 10px; padding-left: 11px; box-sizing: border-box; line-height: 19px; white-space: nowrap; }
.x-status { height: 17px; flex: none; background: #c5c5c5; color: #555; font-size: 10px; line-height: 18px; padding-left: 18px; position: relative; }
.x-view { position: absolute; left: 869px; top: 0; height: 17px; display: flex; align-items: center; }
.x-grid-btn { width: 24px; height: 17px; background: #a2a2a2; display: flex; align-items: center; justify-content: center; }
.x-grid-btn svg { width: 11px; height: 11px; }
.x-lay { width: 13px; height: 13px; margin-left: 6px; }
.x-slider { width: 75px; height: 2px; background: #8f8f8f; margin-left: 4px; position: relative; }
.x-slider i { position: absolute; left: 45px; top: -4px; width: 9px; height: 9px; border-radius: 50%; background: #e8e8e8; }
.x-plus { margin-left: 6px; }
.x-zoom { margin-left: 14px; color: #777; }

/* word */
.w-title {
    height: 21px;
    flex: none;
    background: #2e5a98;
    display: flex;
    align-items: center;
    padding-left: 10px;
    position: relative;
    color: #e6edf6;
}
.w-title .dr { color: #dfe8f4; }
.w-i1 { margin-left: 21px; }
.w-i2 { margin-left: 10px; }
.w-i3 { margin-left: 9px; }
.w-i4 { margin-left: 11px; }
.w-i5 { margin-left: 10px; }
.w-i6 { margin-left: 11px; }
.w-name { position: absolute; left: 431px; font-size: 10.500px; }
.w-search {
    position: absolute;
    left: 688px;
    width: 160px;
    height: 15px;
    background: #264b82;
    border-radius: 2px;
    display: flex;
    align-items: center;
    gap: 1px;
    padding-left: 3px;
    box-sizing: border-box;
    font-size: 10px;
    color: #8fa8ca;
}
.w-search span { margin-left: 1px; }
.w-smile { position: absolute; left: 859px; width: 14px; height: 14px; }
.w-smile + .dr { position: absolute; left: 874px; width: 6px; height: 6px; }
.w-tabs {
    height: 16px;
    flex: none;
    background: #31609f;
    display: flex;
    padding-left: 7px;
    color: #f0f4fa;
    font-size: 10.500px;
    position: relative;
}
.w-tab { width: 39.750px; text-align: center; line-height: 15px; }
.w-tab.on { background: #f5f5f5; color: #2b5a9c; font-weight: bold; width: 38px; margin-right: 1px; border-radius: 2px 2px 0 0; }
.w-share { position: absolute; left: 821px; top: 0; height: 16px; display: flex; align-items: center; font-weight: bold; }
.w-share svg { width: 14px; height: 12px; color: #f0f4fa; margin-right: 3px; }
.w-share .w-chev { width: 10px; height: 8px; margin: 0 0 0 9px; }
.ribbon {
    height: 53px;
    flex: none;
    background: #f5f5f5;
    display: flex;
    box-sizing: border-box;
    border-bottom: 1px solid #e2e2e2;
    position: relative;
}
.r-paste { width: 71px; display: flex; flex: none; position: relative; padding-left: 11px; box-sizing: border-box; }
.r-paste-big { width: 24px; padding-top: 5px; font-size: 8.500px; color: #aaa; text-align: center; line-height: 10px; }
.r-paste-big .big { opacity: .75; margin-bottom: 1px; }
.r-pdrop { margin-top: 15px; width: 5px; color: #bbb; }
.r-small { margin-left: 8px; padding-top: 3px; }
.r-small svg { width: 12px; height: 14px; margin-bottom: 3px; }
.r-small .faded { opacity: .55; }
.sep { width: 1px; flex: none; margin: 5px 0 5px 0; background: #e2e2e2; }
.s2 { margin-left: 6px; }
.s3 { margin-left: 6px; }
.r-font { margin-left: 6px; width: 274px; flex: none; padding-top: 5px; }
.r-para { margin-left: 6px; width: 214px; flex: none; padding-top: 5px; }
.r-row { display: flex; height: 18px; margin-bottom: 5px; }
.sel {
    height: 18px;
    background: #fff;
    border: 1px solid #dcdcdc;
    border-radius: 3px;
    box-sizing: border-box;
    display: flex;
    align-items: center;
    justify-content: space-between;
    padding: 0 2px 0 4px;
    font-size: 9.500px;
    color: #333;
}
.sel .dr { width: 6px; height: 6px; }
.s-font { width: 79px; margin-right: 4px; }
.s-size { width: 44px; margin-right: 3px; }
.grp {
    display: flex;
    height: 18px;
    background: #f9f9f9;
    border: 1px solid #e0e0e0;
    border-radius: 3px;
    box-sizing: border-box;
    overflow: hidden;
}
.g1 { margin-right: 2px; }
.g2 { margin-right: 3px; }
.g-m { margin-left: 3px; }
.g-in { margin-left: 5px; }
.g-a { margin-left: 3px; }
.g-sp { margin-left: 3px; }
.b {
    display: flex;
    align-items: center;
    justify-content: center;
    height: 16px;
    box-sizing: border-box;
    border-left: 1px solid #ebebeb;
    font-size: 11px;
    color: #444;
    flex: none;
    position: relative;
}
.b:first-child { border-left: 0; }
.b .dr { width: 5px; height: 5px; }
.act { background: #d6d6d6; }
.w7 { width: 7px; } .w9 { width: 9px; } .w10 { width: 10px; } .w20 { width: 20px; } .w21 { width: 21px; } .w22 { width: 21.600px; } .w23 { width: 22px; } .w26 { width: 26px; } .w27 { width: 27px; } .w28 { width: 27px; }
.ic { width: 14px; height: 13px; }
.ic2 { width: 13px; height: 11px; }
.t-a { font-size: 13px; }
.t-a2 { font-size: 11px; }
.up, .dn { width: 0; height: 0; border: 3px solid transparent; margin-left: 1px; }
.up { border-bottom: 3px solid #3a8ad6; border-top: 0; }
.dn { border-top: 3px solid #3a8ad6; border-bottom: 0; }
.t-aa { color: #3a8ad6; font-size: 10px; }
.t-aa em { color: #555; font-size: 9px; margin-right: 1px; }
.t-er { color: #555; font-size: 12px; }
.t-er i { position: absolute; left: 10px; top: 6px; width: 10px; height: 6px; background: #e26a82; transform: rotate(-35deg); border-radius: 1px; }
.t-abc small { position: absolute; left: 2px; top: -1px; font-size: 7px; color: #666; }
.t-abc strong { position: absolute; right: 3px; bottom: -1px; font-size: 11px; color: #3a8ad6; font-weight: normal; }
.t-box span { width: 13px; height: 13px; border: 1px solid #3a8ad6; box-sizing: border-box; text-align: center; line-height: 11px; font-size: 10px; }
.t-b { font-weight: bold; font-size: 10px; }
.t-i { font-style: italic; font-family: "Liberation Serif", serif; font-size: 12px; }
.t-u { text-decoration: underline; font-size: 10px; }
.t-s { text-decoration: line-through; font-size: 9.500px; }
.t-x { font-size: 10px; }
.t-x sub, .t-x sup { font-size: 7px; color: #3a8ad6; font-weight: bold; line-height: 0; }
.t-fx { color: #4c9ae2; font-size: 15px; -webkit-text-stroke: .3px #4c9ae2; gap: 2px; }
.t-hl svg { width: 14px; height: 14px; }
.t-col { font-size: 11px; border-bottom: 3px solid #e5101c; height: 15px; width: 14px; margin-left: 3px; margin-right: 3px; line-height: 12px; }
.t-sh span { width: 13px; height: 13px; background: #c8c8c8; text-align: center; font-weight: bold; line-height: 13px; font-size: 11px; }
.t-ph span { width: 13px; height: 13px; border: 1px solid #555; border-radius: 50%; box-sizing: content-box; text-align: center; font-size: 9px; line-height: 13px; }
.t-dir { font-size: 12px; gap: 1px; flex-direction: row; align-items: flex-start; line-height: 11px; }
.t-dir i { position: absolute; left: 3px; right: 9px; bottom: 2px; height: 0; border-top: 2px solid #2f7fd0; }
.t-sort { gap: 2px; }
.t-sort small { font-size: 7px; line-height: 7px; color: #3a8ad6; }
.t-sort b { font-size: 11px; color: #444; }
.gallery {
    margin: 4px 0 0 5px;
    width: 213px;
    height: 47px;
    background: #fff;
    border: 1px solid #dcdcdc;
    border-radius: 3px;
    box-sizing: border-box;
    display: flex;
    padding: 3px 0 0 17px;
    gap: 4px;
    position: relative;
    flex: none;
}
.style {
    width: 53px;
    height: 37px;
    margin-top: 1px;
    background: #fff;
    border: 1px solid #f2f2f2;
    box-sizing: border-box;
    border-radius: 2px;
    text-align: center;
}
.style.h1 { margin-left: 3px; }
.style.chosen { width: 58px; height: 38px; margin-top: 0; border: 2px solid #b5cbe6; border-radius: 3px; }
.s-prev { height: 24px; line-height: 23px; font-size: 9px; color: #222; overflow: hidden; white-space: nowrap; font-family: "Liberation Sans", sans-serif; }
.h1 .s-prev { font-size: 15.500px; font-weight: bold; color: #000; letter-spacing: -.3px; }
.s-cap { height: 12px; line-height: 12px; background: #efefef; font-size: 7.500px; color: #444; }
.more { position: absolute; left: 203px; top: 18px; border: 4px solid transparent; border-left: 5px solid #555; border-right: 0; }
.r-pane { margin-left: 6px; width: 24px; padding-top: 6px; text-align: center; font-size: 8.500px; line-height: 9px; color: #333; }
.r-pane svg { width: 24px; height: 27px; }
.banner {
    height: 22px;
    flex: none;
    background: #fdf3df;
    border-bottom: 1px solid #e6dfcf;
    box-sizing: border-box;
    display: flex;
    align-items: center;
    padding-left: 7px;
    font-size: 9px;
    color: #333;
    position: relative;
}
.b-x { width: 11px; height: 11px; border-radius: 50%; background: #a88d70; color: #f5ead8; font-size: 8px; line-height: 11px; text-align: center; margin-right: 7px; }
.banner b { margin-right: 7px; font-size: 9.200px; }
.b-btn { position: absolute; left: 823px; top: 5px; width: 51px; height: 13px; background: #fdfaf3; border: 1px solid #d9d5cb; box-sizing: border-box; border-radius: 2px; color: #777; text-align: center; line-height: 12px; letter-spacing: .5px; }
.doc {
    flex: 1;
    min-height: 0;
    background: linear-gradient(#f3f3f3, #d9d9d9);
    padding: 17px 69px 0;
    box-sizing: border-box;
    overflow: hidden;
}
.page {
    width: 749px;
    height: 441px;
    background: #fff;
    box-shadow: 0 0 2px rgba(0, 0, 0, .3);
    padding: 68px 68px 0;
    box-sizing: border-box;
}
.marks { display: flex; justify-content: space-between; }
.crop { width: 22px; height: 22px; box-sizing: border-box; }
.cl { border-right: 1px solid #d6d6d6; border-bottom: 1px solid #d6d6d6; }
.cr { border-left: 1px solid #d6d6d6; border-bottom: 1px solid #d6d6d6; }
.para { margin: 5px 0 0 23px; color: #2f7fd8; font-size: 11px; line-height: 16px; font-weight: bold; font-family: "DejaVu Sans", sans-serif; }
.w-status {
    height: 17px;
    flex: none;
    background: #dadada;
    border-top: 1px solid #c4c4c4;
    box-sizing: border-box;
    display: flex;
    align-items: center;
    font-size: 9px;
    color: #666;
    position: relative;
}
.w-s1 { margin-left: 18px; width: 64px; white-space: nowrap; }
.w-s2 { margin-left: 17px; width: 26px; white-space: nowrap; }
.w-book { width: 12px; height: 11px; margin-left: 16px; }
.w-s3 { margin-left: 18px; white-space: nowrap; }
.w-views { position: absolute; left: 597px; top: 0; height: 16px; display: flex; align-items: center; }
.v-on { width: 27px; height: 16px; background: #b5b5b5; display: flex; align-items: center; justify-content: center; }
.w-views svg { width: 13px; height: 12px; }
.w-views > svg { margin-left: 8px; width: 15px; }
.w-views > .v-o { margin-left: 13px; width: 12px; height: 10px; }
.w-minus { position: absolute; left: 716px; font-size: 12px; }
.w-slider { position: absolute; left: 736px; width: 73px; height: 2px; background: #aaa; }
.w-slider i { position: absolute; left: 37px; top: -3px; width: 8px; height: 8px; border-radius: 50%; background: #fff; box-shadow: 0 0 1px #777; }
.w-plus { position: absolute; left: 821px; font-size: 12px; }
.w-zoom { position: absolute; left: 846px; font-size: 10px; }

/* dock */
.dock {
    position: absolute;
    left: 35px;
    top: 647px;
    width: 1025px;
    height: 28px;
    padding: 5px 0 0 4px;
    box-sizing: border-box;
    background: rgba(205, 225, 228, .5);
    border-radius: 4px 0 0 0;
    display: flex;
    align-items: flex-start;
    gap: 2.900px;
}
.dock > svg, .ad { width: 18px; height: 18px; }
.ad {
    flex: none;
    box-sizing: border-box;
    border: 1px solid;
    font-size: 11px;
    line-height: 16px;
    text-align: center;
}
.ps { background: #0b2b3a; border-color: #37b5dc; color: #37c0ea; }
.an { background: #3a0c0a; border-color: #d9584c; color: #ed5a4c; }
.au { background: #05302d; border-color: #1ea59a; color: #25d0c0; }
.lr { background: #0f2d3d; border-color: #1c4a62; color: #a8d2ea; }
.br { background: #2f2204; border-color: #d1a01c; color: #e8b224; }
.cal { font: bold 10px "Liberation Sans", sans-serif; text-anchor: middle; fill: #333; }
.ol { font: bold 8px "Liberation Sans", sans-serif; text-anchor: middle; fill: #fff; }
.dock > .d-mini { margin-left: 14px; width: 14px; opacity: .8; }
.d-sep { width: 1px; height: 22px; background: #8aa39a; margin-left: 7px; flex: none; }
.dock > .d-f { width: 18px; margin-left: 0; }
.dock-dots i { position: absolute; top: 672px; width: 2px; height: 2px; background: #333; border-radius: 50%; }
.d1 { left: 46px; }
.d2 { left: 508px; }
.d3 { left: 550px; }

/* watermark */
.mark { position: absolute; left: 910px; top: 632px; display: flex; align-items: center; }
.mark-c {
    width: 32px;
    height: 32px;
    background: #fff;
    border-radius: 50%;
    color: #5c5c5c;
    font-size: 23px;
    line-height: 31px;
    text-align: center;
    font-family: "Noto Sans CJK SC", sans-serif;
    font-style: italic;
}
.mark-t {
    margin-left: 10px;
    color: #fff;
    font-size: 23px;
    line-height: 32px;
    font-family: "Noto Sans CJK SC", sans-serif;
    font-weight: 300;
    white-space: nowrap;
}
```
